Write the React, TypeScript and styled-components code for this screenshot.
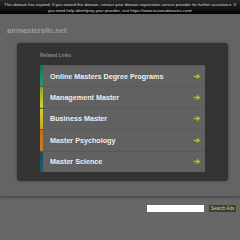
import React from "react";
import styled, { createGlobalStyle } from "styled-components";

const GlobalStyle = createGlobalStyle`
  html, body {
    margin: 0;
    padding: 0;
    background: #676767;
    font-family: "Liberation Sans", Arial, sans-serif;
  }
`;

const TopBar = styled.div`
  height: 14px;
  box-sizing: border-box;
  padding: 2px 2px 0;
  background: linear-gradient(#2a2a2a, #050505);
  color: #d8d8d8;
  font-size: 4.2px;
  line-height: 5.6px;
  text-align: center;
`;

const Main = styled.div`
  height: 182px;
  background: #646464;
  box-shadow: 0 1px 3px rgba(0, 0, 0, 0.45);
  display: flex;
  flex-direction: column;
`;

const Domain = styled.div`
  height: 29px;
  padding-left: 7px;
  display: flex;
  align-items: center;
  padding-top: 3px;
  box-sizing: border-box;
  font-size: 7.5px;
  font-weight: bold;
  color: #9c9c9c;
`;

const Panel = styled.div`
  margin-left: 17px;
  width: 211px;
  height: 138px;
  background: #333;
  border-radius: 3px;
  box-shadow: 0 0 3px rgba(0, 0, 0, 0.4);
  padding: 10px 0 0 23px;
  box-sizing: border-box;
`;

const Label = styled.div`
  font-size: 4.8px;
  font-weight: bold;
  color: #8a8a8a;
  height: 12px;
`;

const List = styled.ul`
  list-style: none;
  margin: 0;
  padding: 0;
  width: 165px;
`;

const Row = styled.li<{ $accent: string }>`
  height: 21.4px;
  box-sizing: border-box;
  display: flex;
  align-items: center;
  justify-content: space-between;
  padding: 0 5px 0 10px;
  background: ${(p) => p.$accent} left / 3px 100% no-repeat, #616161;
  border-top: 1px solid #595959;
  color: #eeeeee;
  font-size: 7.2px;
  font-weight: bold;
`;

const ArrowIcon = () => (
  <svg width="6" height="5" viewBox="0 0 6 5">
    <path d="M0 2.5H4.6M3 0.6L5.2 2.5L3 4.4" stroke="#a6c822" strokeWidth="1.3" fill="none" />
  </svg>
);

const SearchRow = styled.div`
  display: flex;
  justify-content: flex-end;
  align-items: center;
  gap: 5px;
  padding: 9px 4px 0 0;
`;

const SearchInput = styled.input`
  width: 57px;
  height: 7px;
  box-sizing: border-box;
  border: none;
  padding: 0;
  background: #fff;
`;

const SearchButton = styled.button`
  height: 7px;
  width: 27px;
  padding: 0;
  border: none;
  background: #3b4226;
  color: #c9cfb0;
  font-family: "Liberation Sans", Arial, sans-serif;
  font-size: 4.6px;
  line-height: 7px;
`;

const links = [
  { text: "Online Masters Degree Programs", accent: "linear-gradient(#1b6f64, #2e9a66)" },
  { text: "Management Master", accent: "linear-gradient(#8aa020, #d2d830)" },
  { text: "Business Master", accent: "linear-gradient(#d6cc22, #c8a820)" },
  { text: "Master Psychology", accent: "linear-gradient(#c06a1c, #cf7f22)" },
  { text: "Master Science", accent: "linear-gradient(#1a4e60, #1d5c6c)" },
];

const App = () => (
  <>
    <GlobalStyle />
    <TopBar>
      This domain has expired. If you owned this domain, contact your domain registration service provider for further assistance. If
      <br />
      you need help identifying your provider, visit https://www.tucowsdomains.com/
    </TopBar>
    <Main>
      <Domain>airmastersllc.net</Domain>
      <Panel>
        <Label>Related Links</Label>
        <List>
          {links.map((l) => (
            <Row key={l.text} $accent={l.accent}>
              {l.text}
              <ArrowIcon />
            </Row>
          ))}
        </List>
      </Panel>
    </Main>
    <SearchRow>
      <SearchInput />
      <SearchButton>Search Ads</SearchButton>
    </SearchRow>
  </>
);

export default App;
